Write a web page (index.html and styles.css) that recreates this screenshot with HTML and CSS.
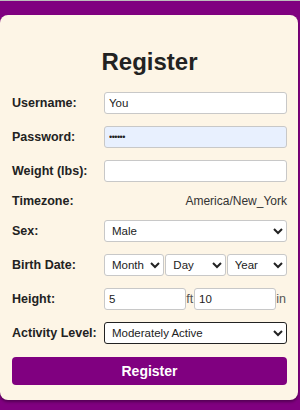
FILE: index.html
```html
<!DOCTYPE html>
<html>
<head>
<meta charset="utf-8">
<link rel="stylesheet" href="styles.css">
</head>
<body>
<div class="topline"></div>
<div class="card">
  <h2 class="title">Register</h2>
  <form class="form">
    <label class="label">Username:</label>
    <input class="field" type="text" value="You">
    <label class="label">Password:</label>
    <input class="field autofill pw" type="password" value="secret">
    <label class="label">Weight (lbs):</label>
    <input class="field" type="text" value="">
    <label class="label">Timezone:</label>
    <div class="tz">America/New_York</div>
    <label class="label">Sex:</label>
    <select class="field sel"><option>Male</option></select>
    <label class="label">Birth Date:</label>
    <div class="row">
      <select class="field sel"><option>Month</option></select>
      <select class="field sel"><option>Day</option></select>
      <select class="field sel"><option>Year</option></select>
    </div>
    <label class="label">Height:</label>
    <div class="row nogap">
      <input class="field" type="text" value="5">
      <span class="unit">ft</span>
      <input class="field" type="text" value="10">
      <span class="unit">in</span>
    </div>
    <label class="label">Activity Level:</label>
    <select class="field sel dark"><option>Moderately Active</option></select>
  </form>
  <button class="btn" type="button">Register</button>
</div>
</body>
</html>
```
FILE: styles.css
```css
html, body {
  margin: 0;
  padding: 0;
}
body {
  background: #800080;
  font-family: "Liberation Sans", Arial, sans-serif;
  color: #222;
  height: 410px;
  overflow: hidden;
}
.topline {
  height: 1px;
  background: #bdbdbd;
}
.card {
  margin: 14px 2px 0 0;
  background: #fdf5e6;
  border-radius: 8px;
  box-shadow: 0 2px 3px rgba(0,0,0,0.35);
  padding: 33px 11px 15px 12px;
}
.title {
  margin: 0 0 16px;
  text-align: center;
  font-size: 24px;
  font-weight: bold;
  color: #222;
}
.form {
  display: grid;
  grid-template-columns: 92px 1fr;
  row-gap: 12px;
  align-items: center;
}
.label {
  font-size: 12.5px;
  font-weight: bold;
  color: #222;
}
.field {
  box-sizing: border-box;
  height: 22px;
  border: 1px solid #c8c8c8;
  border-radius: 3px;
  background: #fff;
  font-family: "Liberation Sans", Arial, sans-serif;
  font-size: 11.5px;
  color: #222;
  padding: 0 4px;
  margin: 0;
  min-width: 0;
  width: 100%;
}
.autofill {
  background: #e8f0fe;
}
.pw {
  font-size: 9px;
  letter-spacing: -0.5px;
}
.sel {
  padding: 0 3px;
}
.dark {
  border-color: #222;
}
.tz {
  text-align: right;
  font-size: 12px;
  color: #333;
}
.row {
  display: flex;
  gap: 1px;
}
.row .field {
  flex: 1;
}
.nogap {
  gap: 0;
  align-items: center;
}
.unit {
  font-size: 12.5px;
  color: #555;
  padding: 0 1px 0 0;
}
.btn {
  display: block;
  width: 100%;
  margin-top: 13px;
  height: 28px;
  border: none;
  border-radius: 4px;
  background: #800080;
  color: #fff;
  font-family: "Liberation Sans", Arial, sans-serif;
  font-size: 14px;
  font-weight: bold;
}
```
